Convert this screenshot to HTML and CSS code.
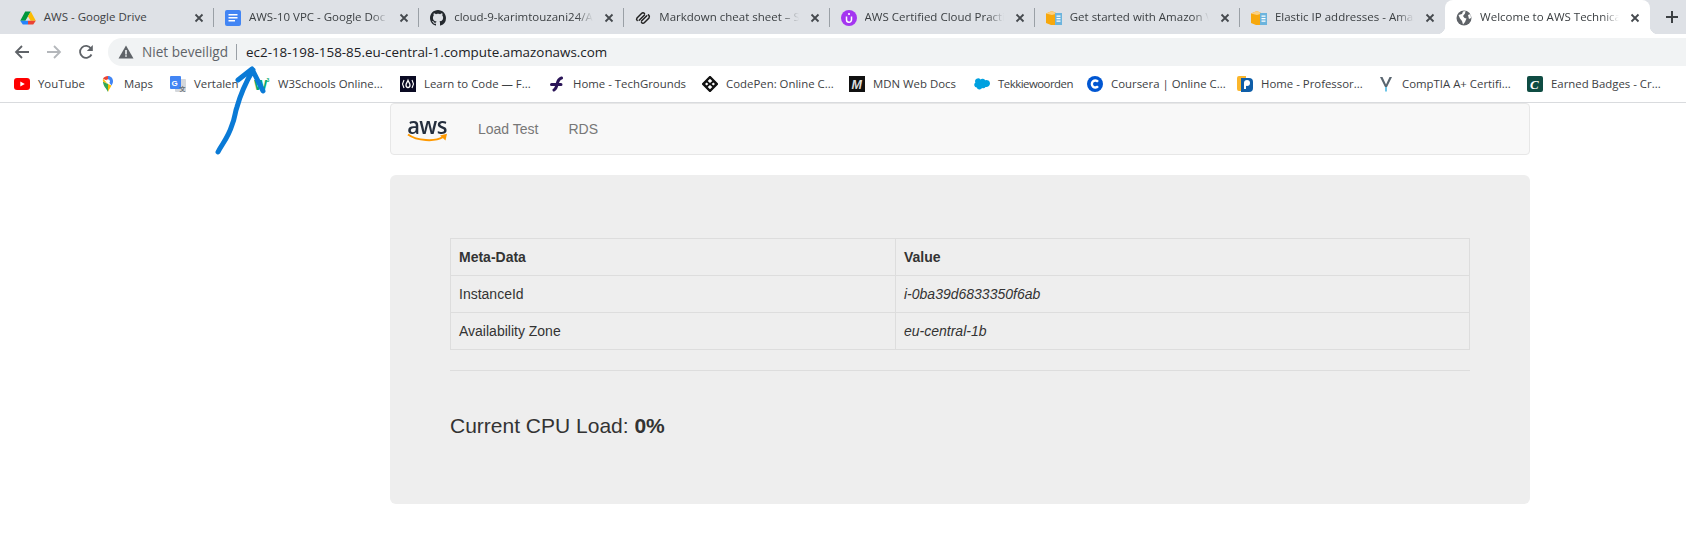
FILE: index.html
```html
<!DOCTYPE html>
<html lang="nl">
<head>
  <meta charset="utf-8">
  <title>Welcome to AWS Technical Essentials</title>
  <link rel="stylesheet" href="styles.css">
</head>
<body>
  <!-- tabs -->
  <div class="tabstrip">
    <div class="tab"><div class="tab-in">
      <svg class="ico" viewBox="0 0 16 16"><path fill="#00983c" d="M5.200 1.500H10.800L8 6.300 5.400 10.800H.2z"/><path fill="#fbbc04" d="M10.800 1.500 15.800 10.800H10.600L8 6.300z"/><path fill="#2684fc" d="M.2 10.800H8V14.500H2.800z"/><path fill="#ea4335" d="M8 10.800H15.800L13.200 14.500H8z"/></svg>
      <span class="title">AWS - Google Drive</span>
      <svg class="close" viewBox="0 0 16 16"><path d="M4.500 4.500l7 7M11.500 4.500l-7 7"/></svg>
    </div></div>
    <div class="tab"><div class="tab-in">
      <svg class="ico" viewBox="0 0 16 16"><rect x="0" y="0" width="16" height="16" rx="2" fill="#4285f4"/><path fill="#fff" d="M3.500 4h9v1.400h-9zM3.500 7h9v1.400h-9zM3.500 10h6.500v1.400H3.500z"/></svg>
      <span class="title fade">AWS-10 VPC - Google Doc</span>
      <svg class="close" viewBox="0 0 16 16"><path d="M4.500 4.500l7 7M11.500 4.500l-7 7"/></svg>
    </div></div>
    <div class="tab"><div class="tab-in">
      <svg class="ico" viewBox="0 0 16 16"><path fill="#24292e" d="M8 0C3.58 0 0 3.58 0 8c0 3.54 2.29 6.53 5.47 7.59.4.07.55-.17.55-.38 0-.19-.01-.82-.01-1.49-2.01.37-2.53-.49-2.69-.94-.09-.23-.48-.94-.82-1.13-.28-.15-.68-.52-.01-.53.63-.01 1.08.58 1.23.82.72 1.21 1.87.87 2.33.66.07-.52.28-.87.51-1.07-1.78-.2-3.64-.89-3.64-3.95 0-.87.31-1.59.82-2.15-.08-.2-.36-1.02.08-2.12 0 0 .67-.21 2.2.82.64-.18 1.32-.27 2-.27.68 0 1.36.09 2 .27 1.53-1.04 2.2-.82 2.2-.82.44 1.1.16 1.92.08 2.12.51.56.82 1.27.82 2.15 0 3.07-1.87 3.75-3.65 3.95.29.25.54.73.54 1.48 0 1.07-.01 1.93-.01 2.2 0 .21.15.46.55.38A8.013 8.013 0 0016 8c0-4.42-3.58-8-8-8z"/></svg>
      <span class="title fade">cloud-9-karimtouzani24/AV</span>
      <svg class="close" viewBox="0 0 16 16"><path d="M4.500 4.500l7 7M11.500 4.500l-7 7"/></svg>
    </div></div>
    <div class="tab"><div class="tab-in">
      <svg class="ico" viewBox="0 0 16 16"><path fill="none" stroke="#222" stroke-width="1.500" stroke-linecap="round" d="M2 8 6.500 3.500Q8 2 9.500 3.500M4.200 10.200 9.500 5M2 8Q1 9.500 2.200 10.500M6.500 11 11.800 5.800M6.500 12.500Q8 14 9.500 12.500L14 8Q15 6 13.500 4.800"/></svg>
      <span class="title fade">Markdown cheat sheet – Sc</span>
      <svg class="close" viewBox="0 0 16 16"><path d="M4.500 4.500l7 7M11.500 4.500l-7 7"/></svg>
    </div></div>
    <div class="tab"><div class="tab-in">
      <svg class="ico" viewBox="0 0 16 16"><circle cx="8" cy="8" r="8" fill="#a435f0"/><path fill="none" stroke="#fff" stroke-width="1.500" d="M5.500 6.500v3.200a2.500 2.500 0 0 0 5 0V6.500"/><circle cx="8" cy="4" r="1.100" fill="#fff"/></svg>
      <span class="title fade">AWS Certified Cloud Practi</span>
      <svg class="close" viewBox="0 0 16 16"><path d="M4.500 4.500l7 7M11.500 4.500l-7 7"/></svg>
    </div></div>
    <div class="tab"><div class="tab-in">
      <svg class="ico" viewBox="0 0 16 16"><path fill="#f7a80d" d="M0 3.500 6 1l5 2.500V15H5L0 13z"/><path fill="#fbd083" d="M0 3.500 6 1l5 2.500-5 1.500z"/><rect x="9" y="3" width="7" height="12" fill="#6cb4dd"/><path fill="#fff" d="M10.500 5.500h4v1.200h-4zM10.500 8h4v1.200h-4zM10.500 10.500h4v1.200h-4z"/></svg>
      <span class="title fade">Get started with Amazon V</span>
      <svg class="close" viewBox="0 0 16 16"><path d="M4.500 4.500l7 7M11.500 4.500l-7 7"/></svg>
    </div></div>
    <div class="tab"><div class="tab-in no-sep">
      <svg class="ico" viewBox="0 0 16 16"><path fill="#f7a80d" d="M0 3.500 6 1l5 2.500V15H5L0 13z"/><path fill="#fbd083" d="M0 3.500 6 1l5 2.500-5 1.500z"/><rect x="9" y="3" width="7" height="12" fill="#6cb4dd"/><path fill="#fff" d="M10.500 5.500h4v1.200h-4zM10.500 8h4v1.200h-4zM10.500 10.500h4v1.200h-4z"/></svg>
      <span class="title fade">Elastic IP addresses - Amaz</span>
      <svg class="close" viewBox="0 0 16 16"><path d="M4.500 4.500l7 7M11.500 4.500l-7 7"/></svg>
    </div></div>
    <div class="tab active"><div class="tab-in no-sep">
      <svg class="ico" viewBox="0 0 16 16"><circle cx="8" cy="8" r="7.500" fill="#5f6368"/><path fill="#fff" d="M2.500 5 6 4l1-2.500 2.500-.5-.5 2.500L7 6 8.500 8l2 .5L9 12l-2 2.500L6 11 4 8.500zM12 5l2.500-1 .5 4-2 1z"/></svg>
      <span class="title fade">Welcome to AWS Technica</span>
      <svg class="close" viewBox="0 0 16 16"><path d="M4.500 4.500l7 7M11.500 4.500l-7 7"/></svg>
    </div></div>
    <svg class="newtab" viewBox="0 0 12 12"><path d="M6 0v12M0 6h12"/></svg>
  </div>

  <!-- adresbalk -->
  <div class="toolbar">
    <svg class="navbtn" viewBox="0 0 16 16"><path fill="none" stroke="#5f6368" stroke-width="1.800" d="M15 8H2M8 2 2 8l6 6"/></svg>
    <svg class="navbtn" viewBox="0 0 16 16"><path fill="none" stroke="#b4b7bb" stroke-width="1.800" d="M1 8h13M8 2l6 6-6 6"/></svg>
    <svg class="navbtn" viewBox="0 0 16 16"><path fill="none" stroke="#5f6368" stroke-width="1.800" d="M13.500 10.500A6 6 0 1 1 13 4.500"/><path fill="#5f6368" d="M14.800 1v6h-6z"/></svg>
    <div class="omnibox">
      <svg class="warn" viewBox="0 0 16 16"><path fill="#5f6368" d="M8 1.500 15.500 14.500H.5z"/><path fill="#f1f3f4" d="M7.200 6h1.600v4.500H7.200zM7.200 11.300h1.600v1.500H7.200z"/></svg>
      <span class="notsafe">Niet beveiligd</span>
      <span class="url">ec2-18-198-158-85.eu-central-1.compute.amazonaws.com</span>
    </div>
  </div>

  <!-- bladwijzers -->
  <div class="bookmarks">
    <div class="bm">
      <svg class="ico" viewBox="0 0 16 16"><rect y="2" width="16" height="12" rx="3" fill="#f00"/><path fill="#fff" d="M6.300 5.500 10.800 8l-4.500 2.500z"/></svg>
      <span>YouTube</span>
    </div>
    <div class="bm">
      <svg class="ico" viewBox="0 0 16 16"><path fill="#34a853" d="M8 16C6.500 12.500 3 10 3 5.500L8 8z"/><path fill="#fbbc04" d="M8 16c1-3 2.500-4.500 3.500-6.500L8 8z"/><path fill="#4285f4" d="M8 0c3 0 5 2.300 5 5.200 0 1.700-.7 3-1.500 4.300L8 5z"/><path fill="#ea4335" d="M8 0C5.800 0 4 1 3 2.800L8 5z"/><path fill="#fbbc04" d="M3 2.800C2.700 3.500 3 5 3 5.500L8 8z"/><circle cx="8" cy="5.200" r="1.900" fill="#fff"/></svg>
      <span>Maps</span>
    </div>
    <div class="bm">
      <svg class="ico" viewBox="0 0 16 16"><rect x="5" y="3" width="11" height="13" rx="1" fill="#d5d8dc"/><rect width="11" height="13" rx="1" fill="#4285f4"/><text x="1.500" y="9.500" class="ico-letter" font-size="8" fill="#fff">G</text><text x="9.500" y="14.500" class="ico-letter" font-size="6" fill="#6b7278">文</text></svg>
      <span>Vertalen</span>
    </div>
    <div class="bm">
      <svg class="ico" viewBox="0 0 16 16"><text x="0" y="14" class="ico-letter" font-size="14" fill="#04aa6d">W</text><text x="12.500" y="6" class="ico-letter" font-size="5" fill="#04aa6d">3</text></svg>
      <span>W3Schools Online...</span>
    </div>
    <div class="bm">
      <svg class="ico" viewBox="0 0 16 16"><rect width="16" height="16" fill="#0a0a23"/><path fill="none" stroke="#fff" stroke-width="1.100" d="M4 4 2.500 8 4 12M12 4l1.500 4-1.500 4"/><path fill="none" stroke="#fff" stroke-width="1.300" d="M8 4.500c.5 1.500 2 2.500 2 4.500 0 1.500-1 2.500-2 2.500S6 10.500 6 9c0-2 1.500-3 2-4.500z"/></svg>
      <span>Learn to Code — F...</span>
    </div>
    <div class="bm">
      <svg class="ico" viewBox="0 0 16 16"><path fill="none" stroke="#2b1558" stroke-width="3" stroke-linecap="round" d="M2.500 8.500H12M12.500 2C9 3 8.500 6 8 8.500 7.500 11 7 13 5 14"/></svg>
      <span>Home - TechGrounds</span>
    </div>
    <div class="bm">
      <svg class="ico" viewBox="0 0 16 16"><path fill="#111" d="M8 .5 15.500 8 8 15.500.5 8z" stroke="#111" stroke-width="1.500" stroke-linejoin="round"/><path fill="#fff" d="M8 2.800 10.300 5.100 8 7 5.700 5.100zM8 9l2.300 1.900L8 13.200 5.700 10.900zM3 8l1.700-1.400L6.300 8 4.700 9.400zM13 8l-1.700-1.400L9.700 8l1.600 1.400z"/></svg>
      <span>CodePen: Online C...</span>
    </div>
    <div class="bm">
      <svg class="ico" viewBox="0 0 16 16"><rect width="16" height="16" fill="#111"/><text x="2.500" y="12.800" class="ico-letter" font-size="12.500" font-style="italic" fill="#ddd">M</text></svg>
      <span>MDN Web Docs</span>
    </div>
    <div class="bm">
      <svg class="ico" viewBox="0 0 16 16"><path fill="#00a1e0" d="M6.500 3.500A3 3 0 0 1 9 2.800a3 3 0 0 1 2.300 1.400 3.500 3.500 0 0 1 4.700 3.300 3.600 3.600 0 0 1-4.500 3.400 2.600 2.600 0 0 1-3.400 1.100 3 3 0 0 1-5.400-.5A2.700 2.700 0 0 1 1.400 6.600a3 3 0 0 1 5.100-3.100z"/></svg>
      <span>Tekkiewoorden</span>
    </div>
    <div class="bm">
      <svg class="ico" viewBox="0 0 16 16"><circle cx="8" cy="8" r="8" fill="#0056d2"/><path fill="none" stroke="#fff" stroke-width="2.400" d="M11 5.700a3.500 3.500 0 1 0 0 4.600"/></svg>
      <span>Coursera | Online C...</span>
    </div>
    <div class="bm">
      <svg class="ico" viewBox="0 0 16 16"><path fill="#fbb62c" d="M2 0h7v2H4v13H2q-2 0-2-2V2q0-2 2-2z"/><path fill="#0f5ea8" d="M4 2h8q4 0 4 4v6q0 4-4 4H4z"/><circle cx="10" cy="7" r="3" fill="#fff"/><path fill="#fff" d="M7 7h2v6H7z"/></svg>
      <span>Home - Professor...</span>
    </div>
    <div class="bm">
      <svg class="ico" viewBox="0 0 16 16"><path fill="#5a6670" d="M2 1h2.500L8 8.500 11.500 1H14L9 11H7z"/><path fill="#6cc5e8" d="M7 11h2v4.500H7z"/></svg>
      <span>CompTIA A+ Certifi...</span>
    </div>
    <div class="bm">
      <svg class="ico" viewBox="0 0 16 16"><rect width="16" height="16" rx="2" fill="#0f4c43"/><text x="3" y="12.500" class="ico-serif" font-size="13" fill="#fff">C</text></svg>
      <span>Earned Badges - Cr...</span>
    </div>
  </div>

  <!-- pagina -->
  <div class="container">
    <div class="navbar">
      <div class="logo">
        <span class="logo-text">aws</span>
        <svg class="logo-smile" viewBox="0 0 40 10"><path fill="none" stroke="#f90" stroke-width="2" d="M1 1.500C10 8 28 9 36 4"/><path fill="#f90" d="M33 2.500 40 .8 38.500 7.500z"/></svg>
      </div>
      <a class="navlink">Load Test</a>
      <a class="navlink">RDS</a>
    </div>

    <div class="jumbotron">
      <table class="meta">
        <tr><th>Meta-Data</th><th>Value</th></tr>
        <tr><td>InstanceId</td><td><em>i-0ba39d6833350f6ab</em></td></tr>
        <tr><td>Availability Zone</td><td><em>eu-central-1b</em></td></tr>
      </table>
      <hr>
      <p class="cpu">Current CPU Load: <b>0%</b></p>
    </div>
  </div>

  <!-- blauwe pijl, met de hand getekend -->
  <svg class="arrow" viewBox="0 0 60 100"><path fill="none" stroke="#0a7ad6" stroke-width="5" stroke-linecap="round" stroke-linejoin="round" d="M8 92C12 84 18 78 22 65 25 58 25 52 27 47 30 36 36 22 43 10M28 20 42 9 53 31"/></svg>
</body>
</html>
```

FILE: styles.css
```css
html, body{
  margin: 0;
  height: 541px;
  overflow: hidden;
  background: #fff;
}
body{
  position: relative;
  font-family: "Liberation Sans", Arial, sans-serif;
  font-size: 14px;
  line-height: 20px;
  color: #333;
}
.ico{
  width: 16px;
  height: 16px;
  flex: none;
}
.ico-letter{
  font-family: "Liberation Sans", "Noto Sans CJK SC", sans-serif;
  font-weight: bold;
}
.ico-serif{
  font-family: "Liberation Serif", serif;
  font-style: italic;
  font-weight: bold;
}

/* tabs */
.tabstrip{
  display: flex;
  align-items: center;
  height: 34px;
  padding-left: 8.8px;
  background: #dee1e6;
  font-family: "Open Sans", sans-serif;
  font-size: 11.5px;
  color: #3c4043;
}
.tab{
  position: relative;
  flex: none;
  width: 205.2px;
  padding: 8px 0 7px;
  box-sizing: border-box;
}
.tab-in{
  display: flex;
  align-items: center;
  gap: 8px;
  height: 19px;
  padding: 0 6px 0 11px;
  border-right: 1px solid #9aa0a6;
}
.tab-in.no-sep{border-right-color: transparent;}
.title{
  flex: 1;
  min-width: 0;
  white-space: nowrap;
  line-height: 18px;
  margin-top: -2px;
}
.title.fade{
  -webkit-mask-image: linear-gradient(to right, #000 88%, transparent 100%);
  mask-image: linear-gradient(to right, #000 88%, transparent 100%);
}
.close{
  flex: none;
  width: 16px;
  height: 16px;
  fill: none;
  stroke: #45494e;
  stroke-width: 1.8;
}
.tab.active{
  background: #fff;
  border-radius: 8px 8px 0 0;
}
/* bochtje onderaan de actieve tab */
.tab.active:before, .tab.active:after{
  content: "";
  position: absolute;
  bottom: 0;
  width: 8px;
  height: 8px;
}
.tab.active:before{
  left: -8px;
  background: radial-gradient(circle at 0 0, transparent 8px, #fff 8.5px);
}
.tab.active:after{
  right: -8px;
  background: radial-gradient(circle at 100% 0, transparent 8px, #fff 8.5px);
}
.newtab{
  flex: none;
  width: 12px;
  height: 12px;
  margin-left: 16px;
  fill: none;
  stroke: #3c4043;
  stroke-width: 2;
}

/* adresbalk */
.toolbar{
  display: flex;
  align-items: center;
  height: 32px;
  padding: 4px 0 0 14px;
  box-sizing: border-box;
}
.navbtn{
  width: 16px;
  height: 16px;
  margin-right: 16px;
  flex: none;
}
.omnibox{
  display: flex;
  align-items: center;
  flex: 1;
  height: 28px;
  margin-left: -2px;
  border-radius: 14px 0 0 14px;
  background: #f1f3f4;
  font-family: "Open Sans", sans-serif;
  font-size: 13.4px;
}
.warn{
  width: 16px;
  height: 16px;
  margin-left: 10px;
}
.notsafe{
  margin-left: 8px;
  padding-right: 8px;
  border-right: 1px solid #9aa0a6;
  font-size: 13.6px;
  line-height: 16px;
  color: #5f6368;
}
.url{
  margin-left: 9px;
  color: #202124;
}

/* bladwijzers */
.bookmarks{
  display: flex;
  align-items: center;
  height: 36px;
  padding: 0 0 0 14px;
  border-bottom: 1px solid #d9dbde;
  font-family: "Open Sans", sans-serif;
  font-size: 11.4px;
  color: #3c4043;
}
.bm{
  display: flex;
  align-items: center;
  gap: 8px;
  flex: none;
  white-space: nowrap;
}
.bm:nth-child(1){width: 86px;}
.bm:nth-child(2){width: 70px;}
.bm:nth-child(3){width: 84px;}
.bm:nth-child(4){width: 146px;}
.bm:nth-child(5){width: 149px;}
.bm:nth-child(6){width: 153px;}
.bm:nth-child(7){width: 147px;}
.bm:nth-child(8){width: 125px;}
.bm:nth-child(9){width: 113px; letter-spacing: -0.5px;}
.bm:nth-child(10){width: 150px;}
.bm:nth-child(11){width: 141px;}
.bm:nth-child(12){width: 149px;}

/* pagina */
.container{
  width: 1140px;
  margin-left: 390px;
}
.navbar{
  display: flex;
  align-items: center;
  height: 50px;
  border: 1px solid #e7e7e7;
  border-radius: 4px;
  background: #f8f8f8;
}
.logo{
  display: flex;
  flex-direction: column;
  align-items: center;
  width: 40px;
  margin-left: 16px;
  margin-right: 16px;
}
.logo-text{
  font-family: "Open Sans", sans-serif;
  font-weight: 600;
  font-size: 22px;
  line-height: 18px;
  letter-spacing: -0.6px;
  color: #252f3e;
  transform: scaleY(1.1);
}
.logo-smile{
  width: 40px;
  height: 10px;
  margin-top: 0;
}
.navlink{
  padding: 0 15px;
  color: #777;
}
.jumbotron{
  margin-top: 20px;
  padding: 63px 60px;
  border-radius: 6px;
  background: #eee;
}
.meta{
  width: 100%;
  table-layout: fixed;
  border-collapse: collapse;
}
.meta th, .meta td{
  padding: 8px;
  border: 1px solid #ddd;
  text-align: left;
}
.meta th:first-child{width: 428px;}
hr{
  margin: 20px 0;
  border: 0;
  border-top: 1px solid #ddd;
}
.cpu{
  margin: 40px 0 0;
  font-size: 21px;
  line-height: 30px;
}

/* pijl ligt over de balken heen */
.arrow{
  position: absolute;
  left: 210px;
  top: 60px;
  width: 60px;
  height: 100px;
}
```
